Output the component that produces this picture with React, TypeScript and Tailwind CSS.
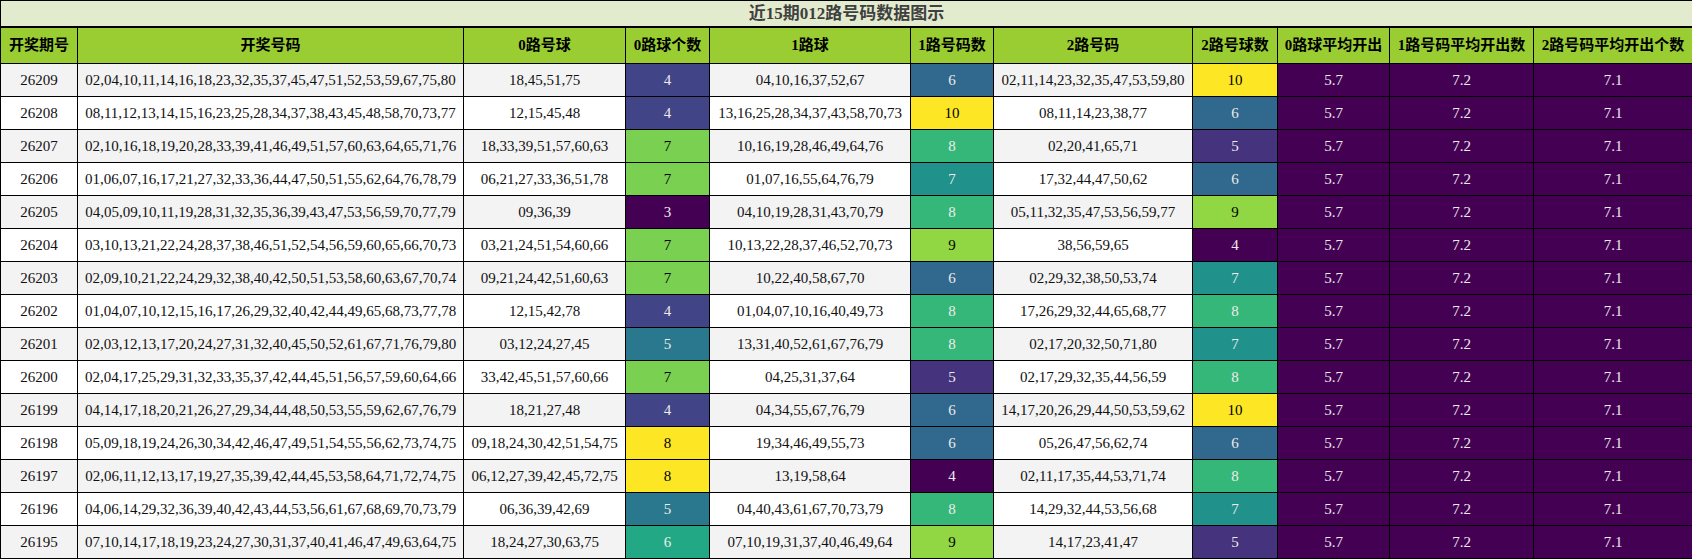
import React from 'react';

type Row = [string, string, string, number, string, number, string, number];

const rows: Row[] = [
  ['26209', '02,04,10,11,14,16,18,23,32,35,37,45,47,51,52,53,59,67,75,80', '18,45,51,75', 4, '04,10,16,37,52,67', 6, '02,11,14,23,32,35,47,53,59,80', 10],
  ['26208', '08,11,12,13,14,15,16,23,25,28,34,37,38,43,45,48,58,70,73,77', '12,15,45,48', 4, '13,16,25,28,34,37,43,58,70,73', 10, '08,11,14,23,38,77', 6],
  ['26207', '02,10,16,18,19,20,28,33,39,41,46,49,51,57,60,63,64,65,71,76', '18,33,39,51,57,60,63', 7, '10,16,19,28,46,49,64,76', 8, '02,20,41,65,71', 5],
  ['26206', '01,06,07,16,17,21,27,32,33,36,44,47,50,51,55,62,64,76,78,79', '06,21,27,33,36,51,78', 7, '01,07,16,55,64,76,79', 7, '17,32,44,47,50,62', 6],
  ['26205', '04,05,09,10,11,19,28,31,32,35,36,39,43,47,53,56,59,70,77,79', '09,36,39', 3, '04,10,19,28,31,43,70,79', 8, '05,11,32,35,47,53,56,59,77', 9],
  ['26204', '03,10,13,21,22,24,28,37,38,46,51,52,54,56,59,60,65,66,70,73', '03,21,24,51,54,60,66', 7, '10,13,22,28,37,46,52,70,73', 9, '38,56,59,65', 4],
  ['26203', '02,09,10,21,22,24,29,32,38,40,42,50,51,53,58,60,63,67,70,74', '09,21,24,42,51,60,63', 7, '10,22,40,58,67,70', 6, '02,29,32,38,50,53,74', 7],
  ['26202', '01,04,07,10,12,15,16,17,26,29,32,40,42,44,49,65,68,73,77,78', '12,15,42,78', 4, '01,04,07,10,16,40,49,73', 8, '17,26,29,32,44,65,68,77', 8],
  ['26201', '02,03,12,13,17,20,24,27,31,32,40,45,50,52,61,67,71,76,79,80', '03,12,24,27,45', 5, '13,31,40,52,61,67,76,79', 8, '02,17,20,32,50,71,80', 7],
  ['26200', '02,04,17,25,29,31,32,33,35,37,42,44,45,51,56,57,59,60,64,66', '33,42,45,51,57,60,66', 7, '04,25,31,37,64', 5, '02,17,29,32,35,44,56,59', 8],
  ['26199', '04,14,17,18,20,21,26,27,29,34,44,48,50,53,55,59,62,67,76,79', '18,21,27,48', 4, '04,34,55,67,76,79', 6, '14,17,20,26,29,44,50,53,59,62', 10],
  ['26198', '05,09,18,19,24,26,30,34,42,46,47,49,51,54,55,56,62,73,74,75', '09,18,24,30,42,51,54,75', 8, '19,34,46,49,55,73', 6, '05,26,47,56,62,74', 6],
  ['26197', '02,06,11,12,13,17,19,27,35,39,42,44,45,53,58,64,71,72,74,75', '06,12,27,39,42,45,72,75', 8, '13,19,58,64', 4, '02,11,17,35,44,53,71,74', 8],
  ['26196', '04,06,14,29,32,36,39,40,42,43,44,53,56,61,67,68,69,70,73,79', '06,36,39,42,69', 5, '04,40,43,61,67,70,73,79', 8, '14,29,32,44,53,56,68', 7],
  ['26195', '07,10,14,17,18,19,23,24,27,30,31,37,40,41,46,47,49,63,64,75', '18,24,27,30,63,75', 6, '07,10,19,31,37,40,46,49,64', 9, '14,17,23,41,47', 5],
];

// viridis shades, 0路 column runs 3..8, 1路 / 2路 columns run 4..10
const zeroScale: Record<number, string> = {
  3: 'bg-[#440154] text-[#ececec]',
  4: 'bg-[#414487] text-[#ececec]',
  5: 'bg-[#2a788e] text-[#ececec]',
  6: 'bg-[#22a884] text-[#ececec]',
  7: 'bg-[#7ad151] text-black',
  8: 'bg-[#fde725] text-black',
};

const restScale: Record<number, string> = {
  4: 'bg-[#440154] text-[#ececec]',
  5: 'bg-[#46337e] text-[#ececec]',
  6: 'bg-[#31688e] text-[#ececec]',
  7: 'bg-[#21918c] text-[#ececec]',
  8: 'bg-[#35b779] text-[#ececec]',
  9: 'bg-[#90d743] text-black',
  10: 'bg-[#fde725] text-black',
};

const headers = [
  '开奖期号',
  '开奖号码',
  '0路号球',
  '0路球个数',
  '1路球',
  '1路号码数',
  '2路号码',
  '2路号球数',
  '0路球平均开出',
  '1路号码平均开出数',
  '2路号码平均开出个数',
];

const widths = ['w-[77px]', 'w-[386px]', 'w-[162px]', 'w-[84px]', 'w-[201px]', 'w-[83px]', 'w-[199px]', 'w-[85px]', 'w-[112px]', 'w-[144px]', 'w-[159px]'];

const cell = 'border border-black text-center whitespace-nowrap p-0';
const avg = `${cell} bg-[#440154] text-[#ececec]`;

export default function App() {
  return (
    <div className="w-[1692px] h-[560px] bg-white font-['Liberation_Serif','Noto_Sans_CJK_SC',serif] text-[15px] text-[#111]">
      <table className="w-[1692px] table-fixed border-collapse">
        <colgroup>
          {widths.map((w, i) => (
            <col key={i} className={w} />
          ))}
        </colgroup>
        <thead>
          <tr className="h-[26px]">
            <th
              colSpan={11}
              className="border border-black border-b-2 bg-[#e3ebcf] text-center text-[17px] leading-none font-bold text-[#404040] p-0"
            >
              近15期012路号码数据图示
            </th>
          </tr>
          <tr className="h-[37px]">
            {headers.map((h) => (
              <th key={h} className={`${cell} bg-[#9acd32] font-bold text-black`}>
                {h}
              </th>
            ))}
          </tr>
        </thead>
        <tbody>
          {rows.map((r, i) => {
            const bg = i % 2 === 0 ? 'bg-[#f3f3f3]' : 'bg-white';
            return (
              <tr key={r[0]} className="h-[33px]">
                <td className={`${cell} ${bg}`}>{r[0]}</td>
                <td className={`${cell} ${bg}`}>{r[1]}</td>
                <td className={`${cell} ${bg}`}>{r[2]}</td>
                <td className={`${cell} ${zeroScale[r[3]]}`}>{r[3]}</td>
                <td className={`${cell} ${bg}`}>{r[4]}</td>
                <td className={`${cell} ${restScale[r[5]]}`}>{r[5]}</td>
                <td className={`${cell} ${bg}`}>{r[6]}</td>
                <td className={`${cell} ${restScale[r[7]]}`}>{r[7]}</td>
                <td className={avg}>5.7</td>
                <td className={avg}>7.2</td>
                <td className={avg}>7.1</td>
              </tr>
            );
          })}
        </tbody>
      </table>
    </div>
  );
}
